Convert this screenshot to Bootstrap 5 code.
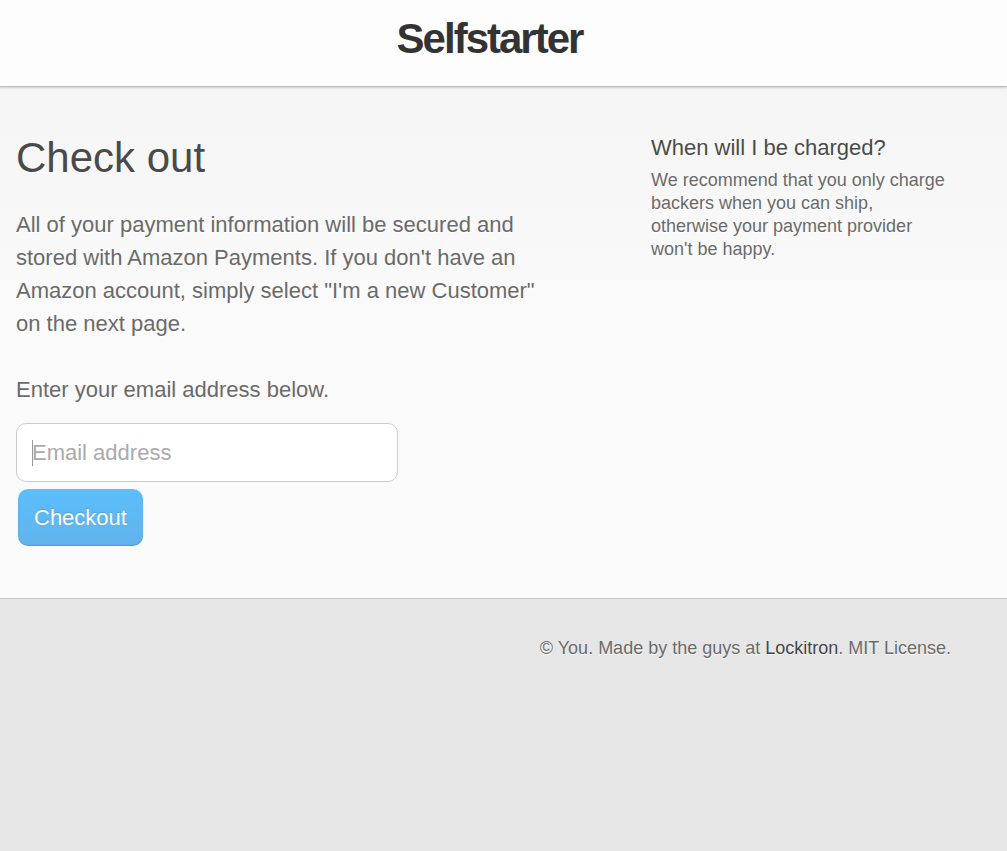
<!DOCTYPE html>
<html lang="en">
<head>
<meta charset="utf-8">
<meta name="viewport" content="width=device-width, initial-scale=1">
<title>Selfstarter – Check out</title>
<link href="https://cdn.jsdelivr.net/npm/bootstrap@5.3.0/dist/css/bootstrap.min.css" rel="stylesheet">
<style>
body { font-family: "Liberation Sans", Arial, sans-serif; background: #e6e6e6; color: #6a6a6a; text-shadow: 0 1px 0 #fff; }
.site-header { background: #fdfdfd; border-bottom: 1px solid #bbb; box-shadow: 0 1px 2px rgba(0,0,0,.15); padding: 11px 28px 19px 0; position: relative; }
.brand { font-size: 42px; line-height: 56px; font-weight: 700; letter-spacing: -2px; color: #333; text-decoration: none; }
.checkout { background: linear-gradient(#f5f5f5, #fafafa 240px, #fafafa); border-bottom: 1px solid #c4c4c4; padding: 46px 16px 52px; }
.page-title { font-size: 42px; line-height: 50px; font-weight: 400; color: #4a4a4a; margin: 0 0 25px; }
.intro { font-size: 22px; line-height: 33px; margin-bottom: 33px; }
.email-label { font-size: 22px; line-height: 33px; margin-bottom: 17px; }
.main-col { flex: 0 1 540px; }
.side-col { flex: 0 1 340px; font-size: 18px; line-height: 23px; padding-right: 40px; }
.side-col h2 { font-size: 22px; line-height: 30px; font-weight: 400; color: #4a4a4a; margin: 0 0 6px; }
/* The thin bar at the left of the field is its text cursor. */
.email-box, .email-box:focus { max-width: 382px; height: 59px; border: 1px solid #ccc; border-radius: 10px; font-size: 22px; padding: 0 15px; background: #fff linear-gradient(#999, #999) no-repeat 15px center / 1px 26px; }
.email-box::placeholder { color: #aaa; }
.pay-btn { font-size: 22px; line-height: 33px; margin: 7px 2px 0; padding: 12px 16px; border: 0; border-radius: 10px; color: #fff; background: linear-gradient(#5bbefc, #62b3ea); box-shadow: inset 0 -1px 1px rgba(0,0,0,.15); text-shadow: 0 -1px 1px rgba(0,0,0,.15); }
.site-footer { padding: 36px 56px 36px 16px; font-size: 18px; line-height: 26px; }
.site-footer a { color: #444; text-decoration: none; }
</style>
</head>
<body>
<header class="site-header d-flex justify-content-center"><a class="brand" href="#">Selfstarter</a></header>
<main class="checkout d-flex flex-wrap flex-md-nowrap justify-content-between gap-4">
<section class="main-col">
<h1 class="page-title">Check out</h1>
<p class="intro">All of your payment information will be secured and stored with Amazon Payments. If you don't have an Amazon account, simply select "I'm a new Customer" on the next page.</p>
<form>
<label class="email-label d-block" for="email">Enter your email address below.</label>
<input class="email-box form-control" id="email" type="email" placeholder="Email address">
<button class="pay-btn d-block" type="button">Checkout</button>
</form>
</section>
<aside class="side-col"><h2>When will I be charged?</h2><p class="mb-0">We recommend that you only charge backers when you can ship, otherwise your payment provider won't be happy.</p></aside>
</main>
<footer class="site-footer text-end">© You. Made by the guys at <a href="#">Lockitron</a>. MIT License.</footer>
<script src="https://cdn.jsdelivr.net/npm/bootstrap@5.3.0/dist/js/bootstrap.bundle.min.js"></script>
</body>
</html>
